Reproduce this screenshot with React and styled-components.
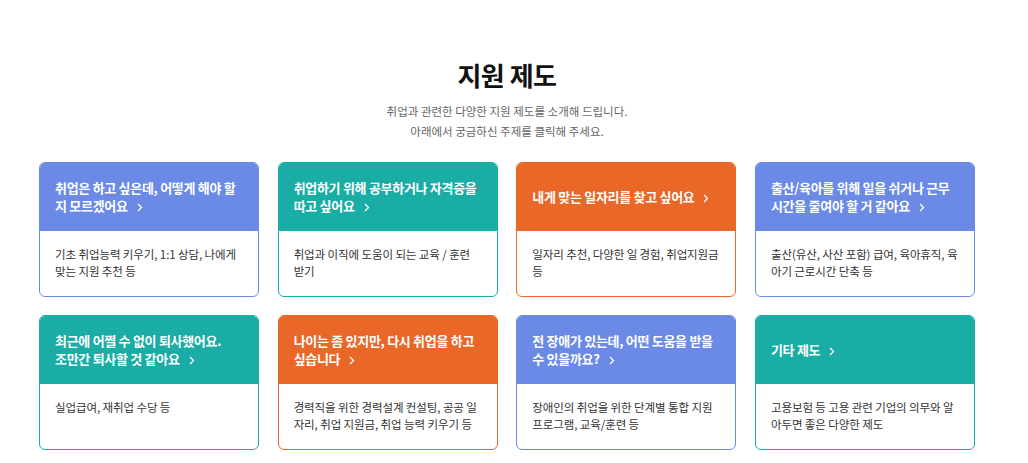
import React from 'react';
import styled, { createGlobalStyle } from 'styled-components';

const GlobalStyle = createGlobalStyle`
  * { box-sizing: border-box; }
  body {
    margin: 0;
    background: #fff;
    font-family: "Noto Sans CJK KR", "Noto Sans", sans-serif;
  }
`;

const colors = {
  blue: '#6a8ae6',
  teal: '#19ada6',
  orange: '#e96727',
};

const Page = styled.main`
  padding: 55px 14px 0 0;
`;

const Title = styled.h1`
  margin: 0;
  text-align: center;
  font-size: 26px;
  font-weight: 700;
  line-height: 40px;
  color: #111;
  letter-spacing: -0.5px;
`;

const Subtitle = styled.p`
  margin: 6px 0 0;
  text-align: center;
  font-size: 11.5px;
  line-height: 20px;
  color: #666;
`;

const Grid = styled.section`
  width: 936px;
  margin: 21px auto 0;
  display: grid;
  grid-template-columns: repeat(4, 1fr);
  gap: 18px 18.6px;
`;

const Card = styled.a`
  display: flex;
  flex-direction: column;
  height: 135px;
  border: 1px solid ${({ $color }) => $color};
  border-radius: 6px;
  overflow: hidden;
  text-decoration: none;
  background: #fff;
`;

const CardHead = styled.div`
  height: 68px;
  flex-shrink: 0;
  display: flex;
  align-items: center;
  padding: 0 15px;
  background: ${({ $color }) => $color};
  color: #fff;
  font-size: 13px;
  font-weight: 700;
  line-height: 18px;
  letter-spacing: -0.3px;
  word-break: keep-all;
`;

const Chevron = styled.svg`
  display: inline-block;
  width: 6px;
  height: 9px;
  margin-left: 9px;
  vertical-align: -0.5px;
`;

const CardBody = styled.p`
  margin: 0;
  padding: 15px 15px 0;
  font-size: 11.5px;
  line-height: 17px;
  letter-spacing: -0.1px;
  color: #333;
`;

const cards = [
  { color: 'blue', title: '취업은 하고 싶은데, 어떻게 해야 할 지 모르겠어요', desc: '기초 취업능력 키우기, 1:1 상담, 나에게 맞는 지원 추천 등' },
  { color: 'teal', title: '취업하기 위해 공부하거나 자격증을 따고 싶어요', desc: '취업과 이직에 도움이 되는 교육 / 훈련 받기' },
  { color: 'orange', title: '내게 맞는 일자리를 찾고 싶어요', desc: '일자리 추천, 다양한 일 경험, 취업지원금 등' },
  { color: 'blue', title: '출산/육아를 위해 일을 쉬거나 근무 시간을 줄여야 할 거 같아요', desc: '출산(유산, 사산 포함) 급여, 육아휴직, 육아기 근로시간 단축 등' },
  { color: 'teal', title: '최근에 어쩔 수 없이 퇴사했어요. 조만간 퇴사할 것 같아요', desc: '실업급여, 재취업 수당 등' },
  { color: 'orange', title: '나이는 좀 있지만, 다시 취업을 하고 싶습니다', desc: '경력직을 위한 경력설계 컨설팅, 공공 일자리, 취업 지원금, 취업 능력 키우기 등' },
  { color: 'blue', title: '전 장애가 있는데, 어떤 도움을 받을 수 있을까요?', desc: '장애인의 취업을 위한 단계별 통합 지원 프로그램, 교육/훈련 등' },
  { color: 'teal', title: '기타 제도', desc: '고용보험 등 고용 관련 기업의 의무와 알아두면 좋은 다양한 제도' },
];

const App = () => (
  <Page>
    <GlobalStyle />
    <Title>지원 제도</Title>
    <Subtitle>
      취업과 관련한 다양한 지원 제도를 소개해 드립니다.
      <br />
      아래에서 궁금하신 주제를 클릭해 주세요.
    </Subtitle>
    <Grid>
      {cards.map((card) => (
        <Card key={card.title} href="#" $color={colors[card.color]}>
          <CardHead $color={colors[card.color]}>
            <span>
              {card.title}
              <Chevron viewBox="0 0 6 9" fill="none">
                <path d="M1 1l3.5 3.5L1 8" stroke="#fff" strokeWidth="1.3" />
              </Chevron>
            </span>
          </CardHead>
          <CardBody>{card.desc}</CardBody>
        </Card>
      ))}
    </Grid>
  </Page>
);

export default App;
